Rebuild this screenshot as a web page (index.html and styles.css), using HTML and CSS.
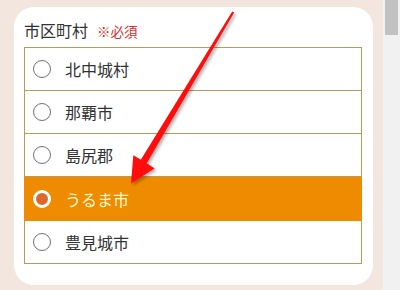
FILE: index.html
```html
<!DOCTYPE html>
<html lang="ja">
<head>
<meta charset="utf-8">
<title>市区町村</title>
<link rel="stylesheet" href="styles.css">
</head>
<body>
<div class="screen">
  <main class="page">
    <section class="card">
      <div class="label">市区町村<span class="req">※必須</span></div>
      <div class="options">
        <label class="opt"><span class="radio"></span><span class="opt-text">北中城村</span></label>
        <label class="opt"><span class="radio"></span><span class="opt-text">那覇市</span></label>
        <label class="opt"><span class="radio"></span><span class="opt-text">島尻郡</span></label>
        <label class="opt selected"><span class="radio"></span><span class="opt-text">うるま市</span></label>
        <label class="opt"><span class="radio"></span><span class="opt-text">豊見城市</span></label>
      </div>
    </section>
  </main>
  <div class="scrollbar"><div class="thumb"></div></div>
  <svg class="arrow" width="400" height="290" viewBox="0 0 400 290" aria-hidden="true">
    <defs>
      <filter id="sh" x="-20%" y="-20%" width="140%" height="140%">
        <feDropShadow dx="2" dy="2" stdDeviation="1.6" flood-color="#000" flood-opacity="0.3"/>
      </filter>
    </defs>
    <polygon filter="url(#sh)" fill="#ff0d0d"
      points="234.2,12.6 232.2,11.4 140.8,159.7 133.3,155.3 131,183.5 154.6,168.6 146.8,163.3"/>
  </svg>
</div>
</body>
</html>
```
FILE: styles.css
```css
html, body {
  margin: 0;
  padding: 0;
}
body {
  font-family: "Noto Sans CJK JP", "Noto Sans", sans-serif;
  color: #333;
}
.screen {
  position: relative;
  width: 400px;
  height: 290px;
  overflow: hidden;
  display: grid;
  grid-template-columns: 383px 17px;
}
.page {
  background: #f3e6de;
  padding: 7px 10px 0 14px;
}
.card {
  box-sizing: border-box;
  height: 278px;
  background: #fff;
  border-radius: 20px;
  padding: 12px 11px 0 10px;
}
.label {
  font-size: 16px;
  line-height: 22px;
  height: 22px;
  margin-bottom: 6px;
  color: #333;
}
.req {
  color: #d6302b;
  font-size: 13.5px;
  margin-left: 9px;
}
.options {
  display: flex;
  flex-direction: column;
}
.opt {
  display: flex;
  align-items: center;
  height: 42px;
  padding-left: 8px;
  border: 1px solid #b59c5c;
  border-top: none;
  font-size: 16px;
  background: #fff;
}
.opt:first-child {
  border-top: 1px solid #b59c5c;
}
.radio {
  box-sizing: border-box;
  width: 18px;
  height: 18px;
  border: 1px solid #707070;
  border-radius: 50%;
  background: #fff;
  margin-right: 14px;
  flex: none;
}
.opt-text {
  line-height: 20px;
}
.selected {
  height: 43px;
  background: #ef8b00;
  border-color: #ef8b00;
  color: #fff6cc;
}
.selected .radio {
  border: 3px solid #fff;
  background: #de672d;
}
.scrollbar {
  background: #f1f1f1;
  padding: 0 2px;
}
.thumb {
  height: 35px;
  background: #c1c1c1;
}
.arrow {
  position: absolute;
  left: 0;
  top: 0;
  pointer-events: none;
}
```
